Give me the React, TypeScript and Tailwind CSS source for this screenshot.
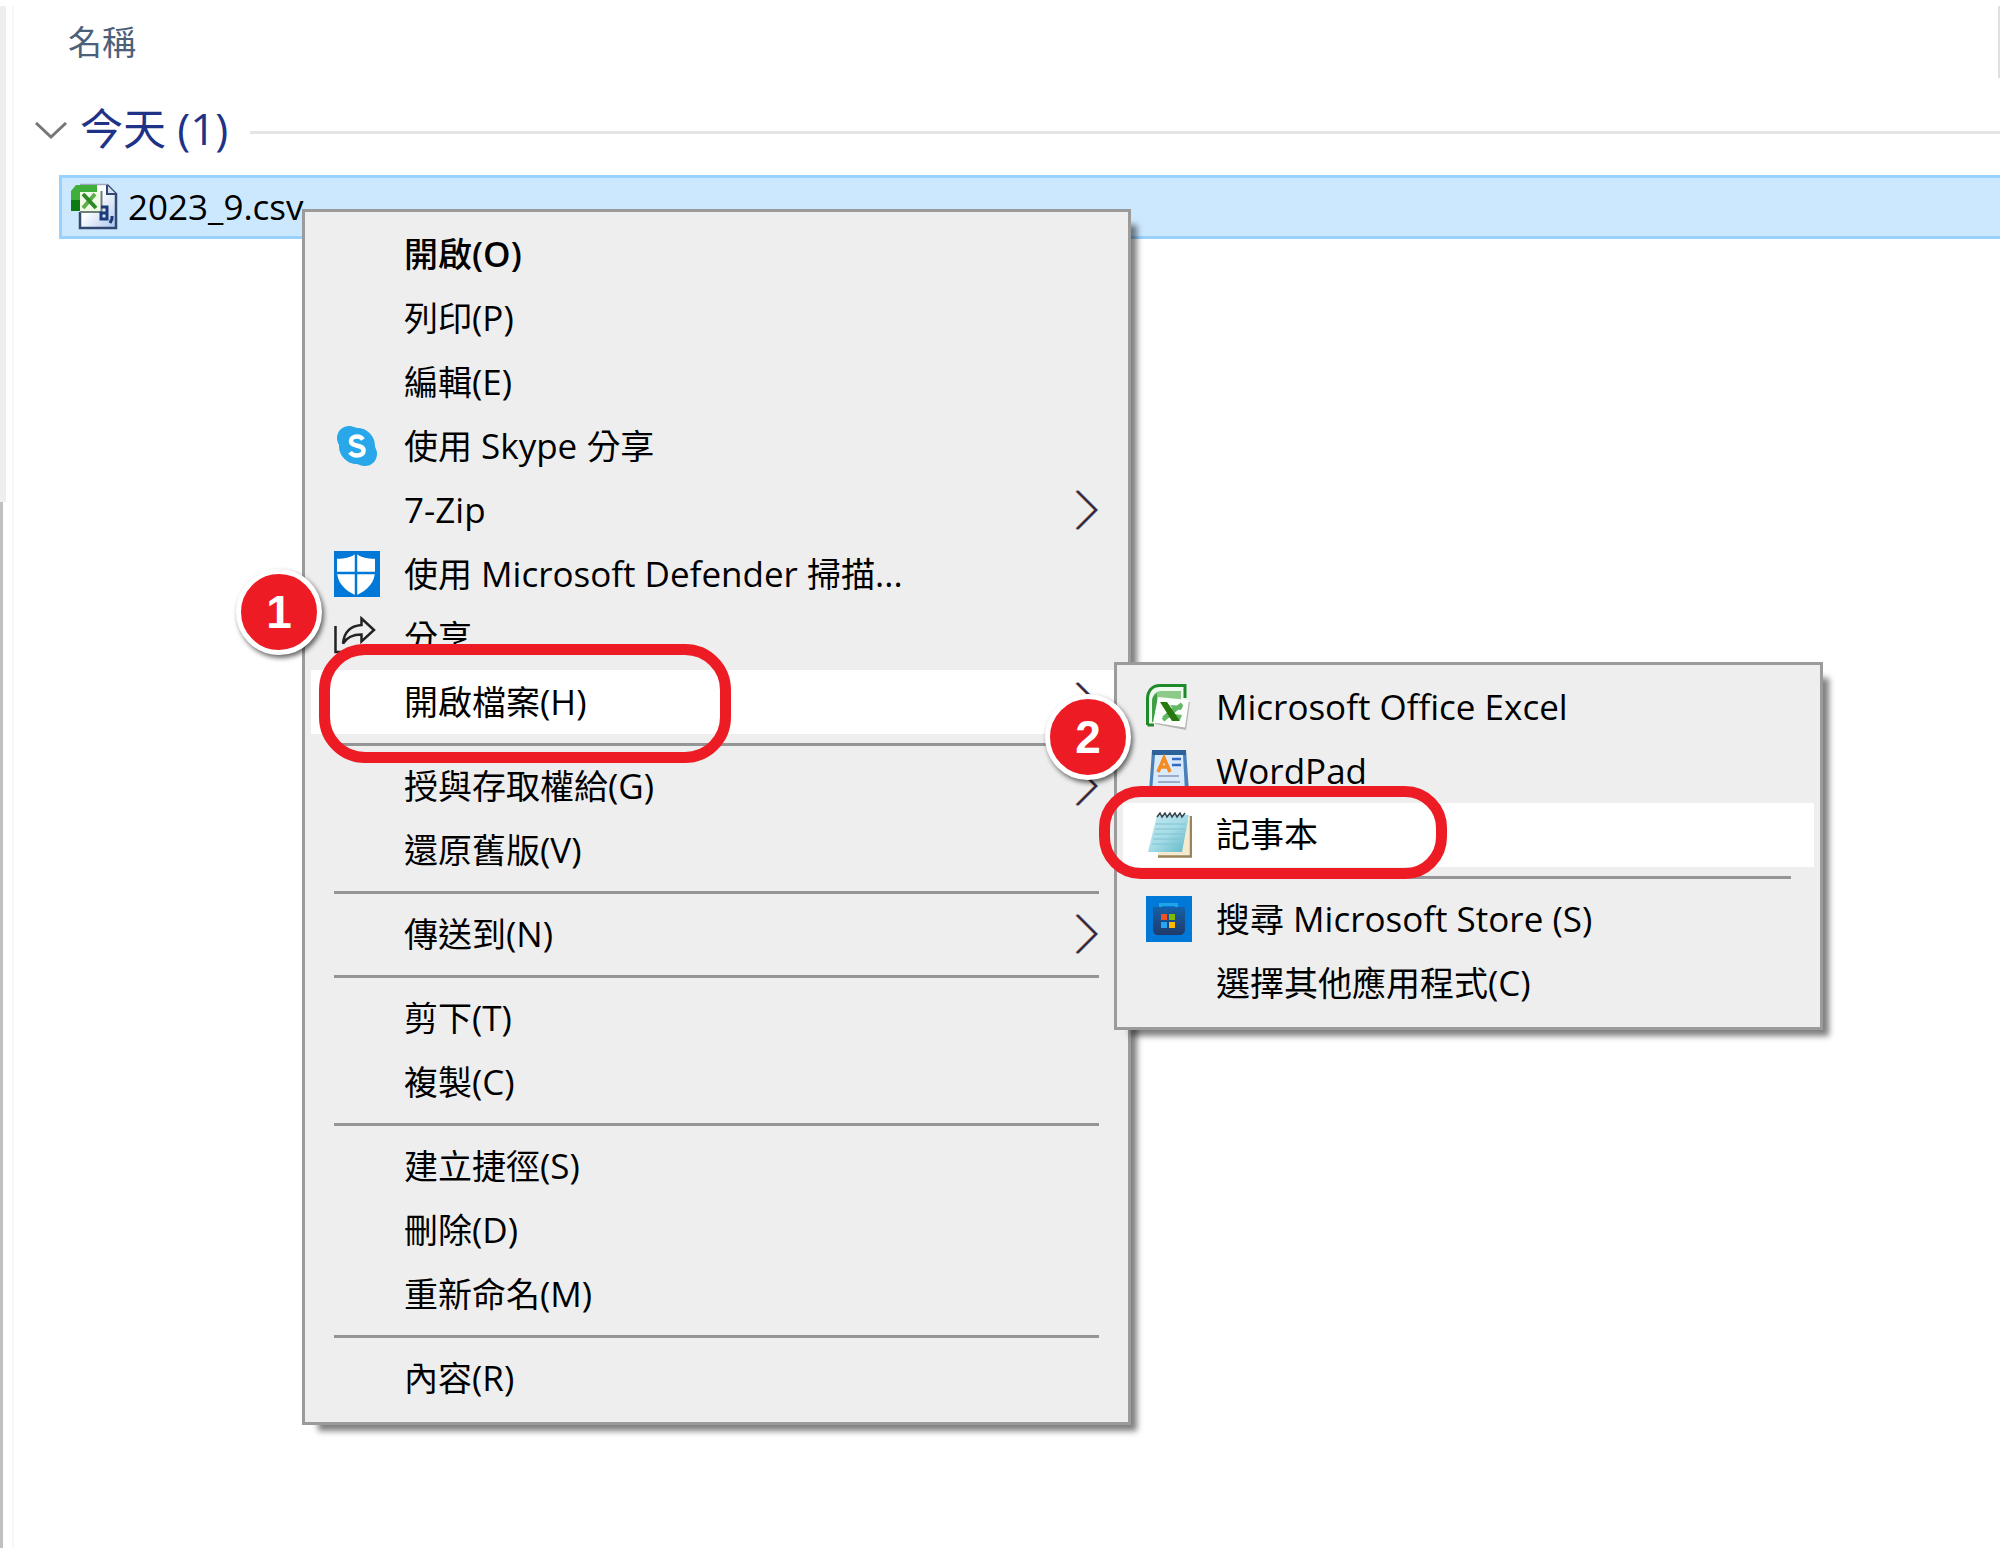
import React from "react";
import clsx from "clsx";

type MenuEntry = {
   label: string;
   icon?: React.ReactNode;
   bold?: boolean;
   active?: boolean;
   submenu?: boolean;
};

// latin runs are set a touch larger than the chinese ones
function MixedText({ text, bold }: { text: string; bold?: boolean }) {
   const parts = text.split(/([\u3400-\u9fff]+)/).filter(Boolean);

   return (
      <span className={clsx("whitespace-pre", bold && "font-medium")}>
         {parts.map((part, i) => (
            <span
               key={i}
               className={clsx(
                  !/[\u3400-\u9fff]/.test(part) && "text-[35px]",
                  !/[\u3400-\u9fff]/.test(part) && bold && "font-semibold"
               )}
            >
               {part}
            </span>
         ))}
      </span>
   );
}

function SkypeIcon() {
   return (
      <svg viewBox="0 0 46 46" className="size-[46px]" aria-hidden="true">
         <circle cx="23" cy="23" r="18" fill="#28a8ea" />
         <circle cx="15" cy="15" r="12" fill="#28a8ea" />
         <circle cx="31" cy="31" r="12" fill="#28a8ea" />
         <path d="M15 3l17 4-24 24-5-16zM31 43l-17-4 24-24 5 16z" fill="#28a8ea" />
         <path
            d="M29 16.500C27.500 14.500 25.500 13.600 23 13.600c-3.600 0-6 1.700-6 4.500 0 6.200 12.600 3.200 12.600 9.400 0 3-2.800 4.900-6.600 4.900-3 0-5.600-1.200-7-3.200"
            fill="none"
            stroke="#fff"
            strokeWidth="4.500"
         />
      </svg>
   );
}

function DefenderIcon() {
   return (
      <svg viewBox="0 0 46 46" className="size-[46px]" aria-hidden="true">
         <rect width="46" height="46" fill="#0078d7" />
         <path
            d="M22 2.500c4.500 3.800 10.500 5.300 19 5.300V20c0 11-7 19-19 24.500C10 39 3 31 3 20V7.800c8.500 0 14.500-1.500 19-5.300z"
            fill="#fff"
         />
         <path d="M22 0v46M2 22h40" stroke="#0078d7" strokeWidth="2.500" />
      </svg>
   );
}

function ShareIcon() {
   return (
      <svg viewBox="0 0 46 46" className="size-[46px]" aria-hidden="true">
         <g fill="none" stroke="#222" strokeWidth="2.500">
            <path d="M1.500 11v26h31v-7" />
            <path d="M27.500 3.500L40 15 27.500 26.500v-7C19 19.500 13 22 9 28.500 10 17 16 11 27.500 10z" />
         </g>
      </svg>
   );
}

function ExcelIcon() {
   return (
      <svg viewBox="0 0 46 46" className="size-[46px]" aria-hidden="true">
         <path
            d="M1.500 41V15C1.500 7 6 1.500 14 1.500h25V14"
            fill="#eef8ec"
            stroke="#1f8a2c"
            strokeWidth="3"
         />
         <path d="M1.500 41H8" stroke="#1f8a2c" strokeWidth="3" />
         <path d="M6 38V17c0-6 4-10 9-10h20v9H18l-6 22z" fill="#8cca8a" />
         <path d="M6 38V18c0-4 2-7 5-9v29z" fill="#3f9f45" />
         <path d="M13 15l31 3-4 28-31-6z" fill="#b5b5b5" />
         <path d="M12 13l31 3-4 27.500L7 38.500z" fill="#fafdf9" />
         <path
            d="M24 21l13 1-2 4-8-1zM16 33l10-9 5 2-8 8zM28 30l8 1-2 5-8-1z"
            fill="#63b765"
         />
         <path d="M36 20L17 36" stroke="#63b765" strokeWidth="4" />
         <path d="M14 18h7l13 19h-8z" fill="#28780f" />
      </svg>
   );
}

function WordPadIcon() {
   return (
      <svg viewBox="0 0 46 46" className="size-[46px]" aria-hidden="true">
         <path d="M6 2h34l3 42H3z" fill="#4a80b8" />
         <path d="M6 2h34v5H6z" fill="#2b6299" />
         <path d="M9 7h28l2 37H6z" fill="#d9eafa" />
         <path
            d="M12 24l6-14 6 14M14 19h8"
            fill="none"
            stroke="#f58a1f"
            strokeWidth="3.500"
         />
         <path d="M26 11h9M26 17h9" stroke="#3569c4" strokeWidth="2.500" />
         <path
            d="M12 28h21M12 34h22M12 40h23"
            stroke="#8a95b8"
            strokeWidth="1.500"
         />
      </svg>
   );
}

function NotepadIcon() {
   return (
      <svg viewBox="0 0 46 46" className="size-[46px]" aria-hidden="true">
         <defs>
            <linearGradient id="pad" x1="0" y1="0" x2="1" y2="1">
               <stop offset="0" stopColor="#c4e9ef" />
               <stop offset="0.500" stopColor="#a5dce6" />
               <stop offset="1" stopColor="#5fb6c8" />
            </linearGradient>
         </defs>
         <path d="M13 8h31v36H12z" fill="#f4ead0" />
         <path
            d="M45 4v40.500H12"
            fill="none"
            stroke="#9b8459"
            strokeWidth="2.500"
         />
         <path d="M11 3h32L36 40H2z" fill="url(#pad)" />
         <path
            d="M10 12h30M9 17h30M8 22h30M7 27h30M6 32h30"
            stroke="#7fc3d2"
            strokeWidth="1"
         />
         <path
            d="M11 5l3-4 2 4 3-4 2 4 3-4 2 4 3-4 2 4 3-4 2 4 3-4"
            fill="none"
            stroke="#3c4650"
            strokeWidth="1.500"
         />
      </svg>
   );
}

function StoreIcon() {
   return (
      <svg viewBox="0 0 46 46" className="size-[46px]" aria-hidden="true">
         <defs>
            <linearGradient id="bag" x1="0" y1="0" x2="0" y2="1">
               <stop offset="0" stopColor="#1560a8" />
               <stop offset="1" stopColor="#1f3a6a" />
            </linearGradient>
         </defs>
         <rect width="46" height="46" fill="#0078d7" />
         <path
            d="M14.500 12V8.500h16V12"
            fill="none"
            stroke="#1fa5e6"
            strokeWidth="3"
         />
         <path d="M7 11h32v22c0 4-2 6-6 6H13c-4 0-6-2-6-6z" fill="url(#bag)" />
         <rect x="15" y="18" width="6" height="6" fill="#f25022" />
         <rect x="23" y="18" width="6" height="6" fill="#7fba00" />
         <rect x="15" y="26" width="6" height="6" fill="#22a7f0" />
         <rect x="23" y="26" width="6" height="6" fill="#ffb900" />
      </svg>
   );
}

function CsvIcon() {
   return (
      <svg viewBox="0 0 48 48" className="size-12" aria-hidden="true">
         <defs>
            <linearGradient id="sheet" x1="0" y1="0" x2="1" y2="1">
               <stop offset="0.400" stopColor="#fff" />
               <stop offset="1" stopColor="#a9c4ee" />
            </linearGradient>
         </defs>
         <path d="M10 2h27l9 9v34H10z" fill="url(#sheet)" />
         <path
            d="M10 1.500h27"
            fill="none"
            stroke="#9aa7bd"
            strokeWidth="1.500"
         />
         <path
            d="M37 2l9 9v34H10V29"
            fill="none"
            stroke="#33486f"
            strokeWidth="2.500"
         />
         <path d="M37 2v9h9" fill="#d5e0f2" stroke="#33486f" strokeWidth="2" />
         <path d="M1 8l5-6h21v7H10v19H1z" fill="#3fae3a" />
         <path d="M1 17h9v11H1z" fill="#0d7a12" />
         <path d="M10 9h20v19H10z" fill="#f0fbe6" />
         <path d="M31.500 8v21H10" fill="none" stroke="#6f7f78" strokeWidth="2" />
         <path d="M25 11L13 25" stroke="#5fae4c" strokeWidth="4" />
         <path d="M13 11l13 14" stroke="#2c8a26" strokeWidth="4" />
         <path
            d="M31 24h6v12h-6v-6h6M42 33v3l-2 4"
            fill="none"
            stroke="#1c3b7c"
            strokeWidth="3"
         />
      </svg>
   );
}

function SubmenuArrow() {
   return (
      <svg
         viewBox="0 0 24 40"
         className="mr-[23px] h-10 w-6 shrink-0"
         fill="none"
         strokeWidth="2"
         aria-hidden="true"
      >
         <path d="M1 1l19 19L1 39" stroke="#e09a4a" />
         <path d="M3 1l19 19L3 39" stroke="#4a9ae8" />
         <path d="M2 1l19 19L2 39" stroke="#3a2038" />
      </svg>
   );
}

function MenuItem({ label, icon, bold, active, submenu }: MenuEntry) {
   return (
      <button
         type="button"
         role="menuitem"
         aria-haspopup={submenu ? "menu" : undefined}
         className={clsx(
            "flex h-16 w-full items-center pl-[23px] text-left",
            active && "bg-white"
         )}
      >
         <span className="mr-6 size-[46px] shrink-0">{icon}</span>
         <span className="flex-1 pb-[2px]">
            <MixedText text={label} bold={bold} />
         </span>
         {submenu && <SubmenuArrow />}
      </button>
   );
}

function Menu({
   name,
   groups,
   className,
}: {
   name: string;
   groups: MenuEntry[][];
   className: string;
}) {
   return (
      <div
         role="menu"
         aria-label={name}
         className={clsx(
            "absolute border-3 border-[#9b9b9b] bg-[#eee] px-[6px] pt-[10px] pb-3 shadow-[11px_11px_6px_-5px_rgba(0,0,0,0.500)]",
            className
         )}
      >
         {groups.map((group, i) => (
            <React.Fragment key={i}>
               {i > 0 && (
                  <div className="flex h-5 items-center px-[23px]">
                     <hr className="h-[3px] w-full border-0 bg-[#959595]" />
                  </div>
               )}
               {group.map((entry) => (
                  <MenuItem key={entry.label} {...entry} />
               ))}
            </React.Fragment>
         ))}
      </div>
   );
}

function StepBadge({ step, className }: { step: number; className: string }) {
   return (
      <div
         className={clsx(
            "absolute flex size-[86px] items-center justify-center rounded-full border-5 border-white bg-[#ed1c24] font-['Liberation_Sans',sans-serif] text-[46px] leading-none font-bold text-white shadow-[2px_3px_5px_rgba(0,0,0,0.600)]",
            className
         )}
      >
         {step}
      </div>
   );
}

const fileMenu: MenuEntry[][] = [
   [
      { label: "開啟(O)", bold: true },
      { label: "列印(P)" },
      { label: "編輯(E)" },
      { label: "使用 Skype 分享", icon: <SkypeIcon /> },
      { label: "7-Zip", submenu: true },
      { label: "使用 Microsoft Defender 掃描...", icon: <DefenderIcon /> },
      { label: "分享", icon: <ShareIcon /> },
      { label: "開啟檔案(H)", active: true, submenu: true },
   ],
   [{ label: "授與存取權給(G)", submenu: true }, { label: "還原舊版(V)" }],
   [{ label: "傳送到(N)", submenu: true }],
   [{ label: "剪下(T)" }, { label: "複製(C)" }],
   [{ label: "建立捷徑(S)" }, { label: "刪除(D)" }, { label: "重新命名(M)" }],
   [{ label: "內容(R)" }],
];

const openWithMenu: MenuEntry[][] = [
   [
      { label: "Microsoft Office Excel", icon: <ExcelIcon /> },
      { label: "WordPad", icon: <WordPadIcon /> },
      { label: "記事本", icon: <NotepadIcon />, active: true },
   ],
   [
      { label: "搜尋 Microsoft Store (S)", icon: <StoreIcon /> },
      { label: "選擇其他應用程式(C)" },
   ],
];

export default function App() {
   return (
      <main className="relative flex min-h-screen overflow-hidden bg-white pt-[6px] font-['Open_Sans','Noto_Sans_CJK_TC',sans-serif] text-[34px] leading-none text-black">
         <div className="flex w-[14px] shrink-0 flex-col border-r-2 border-[#f7f7f7]">
            <div className="h-[496px] w-[6px] bg-[#eee]" />
            <div className="w-[3px] flex-1 bg-[#c0c0c0]" />
         </div>

         <section className="min-w-0 flex-1">
            <header className="flex h-[72px] items-center border-r-2 border-[#e0e0e0] pl-[54px] text-[#4c607a]">
               名稱
            </header>

            <button
               type="button"
               className="mt-[22px] flex h-16 w-full items-center pl-[20px] text-[#1e3287]"
            >
               <svg
                  viewBox="0 0 34 20"
                  className="h-5 w-[34px] shrink-0"
                  aria-hidden="true"
               >
                  <path
                     d="M2 1l15 14L32 1"
                     fill="none"
                     stroke="#777"
                     strokeWidth="3"
                  />
               </svg>
               <span className="ml-3 pb-2 text-[43px] whitespace-pre">
                  今天 <span className="text-[44px]">(1)</span>
               </span>
               <span className="ml-[22px] h-[3px] flex-1 bg-[#e5e5e5]" />
            </button>

            <button
               type="button"
               className="mt-[11px] ml-[45px] flex h-16 w-[calc(100%-42px)] items-center border-3 border-[#99d1ff] bg-[#cce8ff] pl-2"
            >
               <CsvIcon />
               <span className="ml-[10px] pb-[2px]">
                  <MixedText text="2023_9.csv" />
               </span>
            </button>
         </section>

         <Menu
            name="2023_9.csv"
            groups={fileMenu}
            className="top-[209px] left-[302px] w-[829px]"
         />
         <Menu
            name="開啟檔案"
            groups={openWithMenu}
            className="top-[662px] left-[1114px] w-[709px]"
         />

         <div className="pointer-events-none absolute top-[644px] left-[319px] h-[119px] w-[412px] rounded-[46px] border-11 border-[#ed1c24]" />
         <div className="pointer-events-none absolute top-[786px] left-[1099px] h-[93px] w-[348px] rounded-[42px] border-11 border-[#ed1c24]" />
         <StepBadge step={1} className="top-[569px] left-[236px]" />
         <StepBadge step={2} className="top-[694px] left-[1045px]" />
      </main>
   );
}
